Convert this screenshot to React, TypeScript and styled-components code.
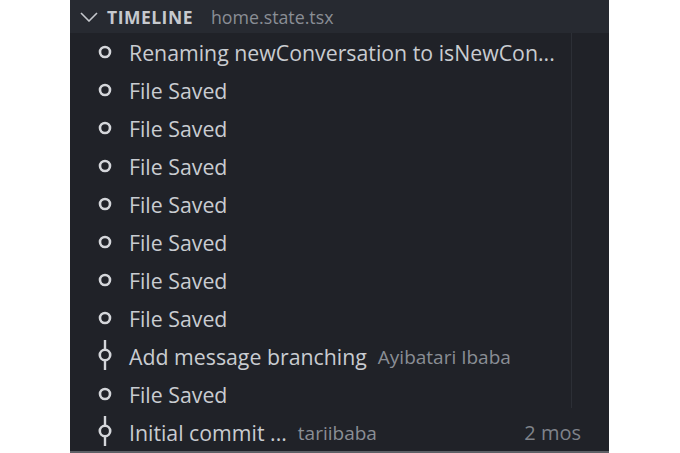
import styled, { createGlobalStyle } from "styled-components"

const Global = createGlobalStyle`
  html, body { margin: 0; padding: 0; background: #ffffff; }
  body { font-family: "Open Sans", "Noto Sans", sans-serif; }
`

type Entry = { label: string; author?: string; time?: string; commit?: boolean }

const entries: Entry[] = [
  { label: "Renaming newConversation to isNewCon..." },
  { label: "File Saved" },
  { label: "File Saved" },
  { label: "File Saved" },
  { label: "File Saved" },
  { label: "File Saved" },
  { label: "File Saved" },
  { label: "File Saved" },
  { label: "Add message branching", author: "Ayibatari Ibaba", commit: true },
  { label: "File Saved" },
  { label: "Initial commit ...", author: "tariibaba", time: "2 mos", commit: true },
]

const App = () => {
  return (
    <Page>
      <Global />
      <Panel>
        <Header>
          <Chevron viewBox="0 0 18 10">
            <path d="M1 1 L9 9 L17 1" fill="none" stroke="#c5c8cd" strokeWidth="1.6" />
          </Chevron>
          <Title>TIMELINE</Title>
          <FileName>home.state.tsx</FileName>
        </Header>
        <List>
          <Guide />
          {entries.map((e, i) => (
            <Row key={i}>
              <IconCell>
                {e.commit ? (
                  <svg width="16" height="32" viewBox="0 0 16 32">
                    <line x1="8" y1="0" x2="8" y2="30" stroke="#d4d6da" strokeWidth="2.4" />
                    <circle cx="8" cy="15" r="5.2" fill="#202228" stroke="#d4d6da" strokeWidth="2.6" />
                  </svg>
                ) : (
                  <svg width="16" height="16" viewBox="0 0 16 16">
                    <circle cx="8" cy="8" r="5" fill="none" stroke="#d4d6da" strokeWidth="2.6" />
                  </svg>
                )}
              </IconCell>
              <Label>{e.label}</Label>
              {e.author && <Author>{e.author}</Author>}
              {e.time && <Time>{e.time}</Time>}
            </Row>
          ))}
        </List>
      </Panel>
    </Page>
  )
}

export default App

const Page = styled.div`
  width: 680px;
  height: 453px;
  overflow: hidden;
`

const Panel = styled.div`
  margin-left: 70px;
  width: 539px;
  height: 451px;
  background-color: #202228;
  border-bottom: 2px solid #5d6066;
  display: flex;
  flex-direction: column;
`

const Header = styled.div`
  height: 35px;
  background-color: #272a31;
  display: flex;
  align-items: center;
  padding-left: 10px;
  box-sizing: border-box;
`

const Chevron = styled.svg`
  width: 18px;
  height: 10px;
  margin-right: 9px;
  margin-top: 1px;
`

const Title = styled.span`
  font-size: 17.5px;
  font-weight: 700;
  color: #c6c9ce;
  letter-spacing: 0.5px;
`

const FileName = styled.span`
  font-size: 17.8px;
  color: #8a8e95;
  margin-left: 18px;
`

const List = styled.div`
  position: relative;
  flex: 1;
  display: flex;
  flex-direction: column;
`

const Guide = styled.div`
  position: absolute;
  left: 501px;
  top: 0;
  height: 375px;
  width: 1px;
  background-color: #2c2f36;
`

const Row = styled.div`
  height: 38px;
  display: flex;
  align-items: center;
  padding-left: 27px;
  padding-right: 28px;
`

const IconCell = styled.div`
  width: 16px;
  height: 38px;
  display: flex;
  align-items: center;
  justify-content: center;
  margin-right: 16px;
`

const Label = styled.span`
  font-size: 21.3px;
  color: #c9ccd1;
  white-space: nowrap;
`

const Author = styled.span`
  font-size: 19px;
  color: #8a8e95;
  margin-left: 11px;
  margin-top: 2px;
`

const Time = styled.span`
  margin-left: auto;
  font-size: 20px;
  color: #7f838a;
`
